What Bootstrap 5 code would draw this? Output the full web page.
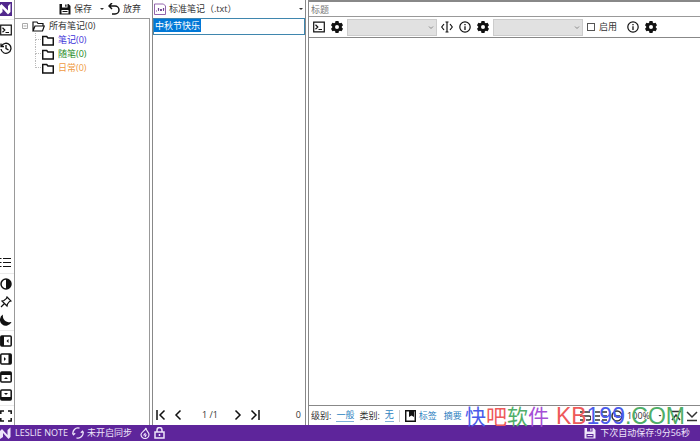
<!DOCTYPE html>
<html lang="zh-CN">
<head>
<meta charset="utf-8">
<meta name="viewport" content="width=device-width, initial-scale=1">
<title>Leslie Note</title>
<link href="https://cdn.jsdelivr.net/npm/bootstrap@5.3.0/dist/css/bootstrap.min.css" rel="stylesheet">
<style>
body{font-family:"Open Sans","Noto Sans CJK SC",sans-serif;font-size:9px;line-height:14px;color:#333;background:#fff}
svg{display:block;flex:none;fill:none;stroke:currentColor;stroke-width:1.5}
svg .solid{fill:currentColor;stroke:none}
svg .violet{fill:#51288c;stroke:none}
button,a{color:inherit;text-decoration:none}
button{border:0;background:none;padding:0;display:flex;align-items:center;gap:3px;white-space:nowrap}
button svg{color:#111}
.workspace{display:grid;grid-template-columns:15px 135fr 158fr 392fr;min-height:0}
.rail{border-right:1px solid #999;overflow:hidden}
.rail button{height:18px;width:15px}
.rail hr{margin:1px 0;border-color:#aaa;width:100%}
.topbar{height:18px}
.file-actions{padding-right:9px}
.panes{border:1px solid #999;border-left:0;border-bottom:0}
.tree ul{list-style:none;margin:0;padding:0}
.tree li{height:14px;display:flex;align-items:center;gap:4px}
.tree .root{padding-left:7px}
.tree .leaf{padding-left:27px;position:relative}
.tree .leaf svg{color:#111}
.tree .leaf::before{content:"";position:absolute;left:20px;top:0;width:6px;height:7px;border:dotted #bbb;border-width:0 0 1px 1px}
.tree .leaf:not(:last-child)::after{content:"";position:absolute;left:20px;top:7px;height:7px;border-left:1px dotted #bbb}
.tone-blue{color:#3c32d8}.tone-green{color:#218a21}.tone-orange{color:#ef9a42}
.notes{margin:0 2px;border:1px solid #888;border-width:0 1px}
.notes-list{border-top:1px solid #3f86ae}
.note-title{padding:0 2px 0 1px}
.note{height:16px;border:1px solid #3f86ae;border-top:0}
.note span{display:inline-block;background:#0078d7;color:#fff;line-height:13px;padding:0 1px}
.caret{width:4px;height:2px;background:#333;clip-path:polygon(0 0,100% 0,50% 100%)}
.editor{border:1px solid #888;border-bottom:0;border-right:0;border-top-width:2px}
.title-input{height:15px;border:0;border-bottom:1px solid #999;padding:0 2px;font-size:9px;width:100%;outline:0;border-radius:0}
.title-input::placeholder{color:#777;opacity:1}
.tools{height:21px;padding:0 4px;border-bottom:1px solid #888}
.tools button{margin-right:6px}
.tools button.me-1{margin-right:4px}
.tools select{display:block;appearance:none;width:90px;height:17px;border:1px solid #ccc;border-radius:0;background:#e1e1e1}
.tools label{margin-right:10px}
.picker{position:relative}
.picker svg{position:absolute;right:3px;top:7px;color:#888}
.tools input{appearance:none;width:8px;height:8px;margin:0;border:1px solid #555;background:#fff}
.body-text{border:0;resize:none;outline:0;width:100%;min-height:0}
.bottom{height:20px}
.pager{padding:0 4px 0 3px;gap:8px}
.pager .count{margin:0 8px 0 12px}
.props{border-top:1px solid #888;padding:0 2px;gap:5px}
.props a{color:#2b7fc0}
.props a.under{border-bottom:1px solid #7fb0da;line-height:12px}
.props .sep{width:1px;height:12px;background:#ccc}
.props .tag{gap:3px;margin-right:2px}
.status{height:16px;background:#5e259b;color:#eee5fa;padding-right:10px}
.status .synced{gap:3px}
.watermark{position:absolute;right:15px;bottom:9px;font-size:21px;line-height:32px;white-space:nowrap;pointer-events:none}
.watermark b{font-weight:400}
.wm-latin{font-family:"Liberation Sans",sans-serif;font-size:23px;margin-left:7px}
.c1{color:#4a5bea}.c2{color:#ee5a5a}.c3{color:#4fae68}.c4{color:#a64fd6}
</style>
</head>
<body class="d-flex flex-column vh-100 overflow-hidden position-relative">
<svg width="0" height="0" class="position-absolute" aria-hidden="true">
<symbol id="gear" viewBox="0 0 12 12"><path class="solid" fill-rule="evenodd" d="M4.500 0h3l.4 1.700 1 .6 1.700-.6L12 4.200 10.800 5.500v1L12 7.800l-1.400 2.500-1.700-.6-1 .6L7.500 12h-3l-.4-1.700-1-.6-1.700.6L0 7.800l1.200-1.300v-1L0 4.200l1.400-2.500 1.700.6 1-.6zM6 4a2 2 0 1 0 0 4 2 2 0 0 0 0-4z"/></symbol>
<symbol id="term" viewBox="0 0 12 12"><path d="M.7 1.200h10.600v9.600H.7zM2.500 3.800 4.800 6 2.500 8.200M5.500 8.500H9" stroke-width="1.200"/></symbol>
<symbol id="info" viewBox="0 0 12 12"><circle cx="6" cy="6" r="5.200" stroke-width="1.200"/><path d="M6 5.200V9M6 3v1.300" stroke-width="1.300"/></symbol>
<symbol id="folder" viewBox="0 0 12 11"><path d="M.7 1.500h4l1.200 1.500h5.400v7H.7z"/></symbol>
<symbol id="disk" viewBox="0 0 12 12"><path class="solid" fill-rule="evenodd" d="M1 1h8.500L11.500 3v8.500H.5V1zM3 1v3.500h5.500V1zM2.500 7v3.500h7V7z"/><path class="solid" d="M6.200 1.500h1.300v2.300H6.200zM3.500 8h5v1h-5z"/></symbol>
<symbol id="prev" viewBox="0 0 8 12"><path d="M6.500 1.500 2 6l4.500 4.500"/></symbol>
<symbol id="next" viewBox="0 0 8 12"><path d="M1.500 1.500 6 6l-4.500 4.500"/></symbol>
<symbol id="down" viewBox="0 0 6 4"><path d="m1 .5 2 2 2-2" stroke-width="1"/></symbol>
</svg>
<main class="workspace flex-grow-1">
<nav class="rail d-flex flex-column" aria-label="工具">
<button aria-label="主页"><svg class="text-white" width="12" height="14" viewBox="0 0 12 14"><path class="violet" d="M0 0h12v14H0z"/><path class="solid" d="M0 3.500 1.500 2 8 8.500V4l2.500-2.500V10L8 12.500 2.500 6.500V10L0 12z"/></svg></button>
<hr>
<button aria-label="控制台"><svg width="12" height="12"><use href="#term"/></svg></button>
<button aria-label="历史"><svg width="12" height="12" viewBox="0 0 12 12"><path d="M1.500 4A5 5 0 1 1 1 7M1 1.500V4.500h3M6 3v3.500l2.500 1.300" stroke-width="1.300"/></svg></button>
<div class="mt-auto"></div>
<button aria-label="列表"><svg width="12" height="12" viewBox="0 0 12 12"><path d="M3 1.500h8M3 5.500h8M3 9.500h8M0 1.500h1.500M0 5.500h1.500M0 9.500h1.500" stroke-width="1.200"/></svg></button>
<hr>
<button aria-label="对比度"><svg width="12" height="12" viewBox="0 0 12 12"><circle cx="6" cy="6" r="5"/><path class="solid" d="M6 1a5 5 0 0 1 0 10z"/></svg></button>
<button aria-label="固定"><svg width="12" height="12" viewBox="0 0 12 12"><path d="m7 1 4 4-1.500.5L7.500 8 7 10 2 5l2-.5L6.500 2.500zM4.500 7.500 1 11" stroke-width="1.200"/></svg></button>
<button aria-label="夜间"><svg width="12" height="12" viewBox="0 0 12 12"><path class="solid" d="M3 .5C2 5 6 9 11.500 8A6 6 0 1 1 3 .5z"/></svg></button>
<hr>
<button aria-label="左栏"><svg width="12" height="12" viewBox="0 0 12 12"><rect x=".8" y="1" width="10.400" height="10" rx="1"/><path class="solid" d="M1 1h3v10H1zM8.500 4v4l-2-2z"/></svg></button>
<button aria-label="右栏"><svg width="12" height="12" viewBox="0 0 12 12"><rect x=".8" y="1" width="10.400" height="10" rx="1"/><path class="solid" d="M8.500 1h2.500v10H8.500zM4 4v4l2-2z"/></svg></button>
<button aria-label="上栏"><svg width="12" height="12" viewBox="0 0 12 12"><rect x=".8" y="1" width="10.400" height="10" rx="1"/><path class="solid" d="M1 1h10v3H1zM4 8h4L6 6z"/></svg></button>
<button aria-label="下栏"><svg width="12" height="12" viewBox="0 0 12 12"><rect x=".8" y="1" width="10.400" height="10" rx="1"/><path class="solid" d="M1 8h10v3H1zM4 4h4L6 6z"/></svg></button>
<hr>
<button aria-label="全屏"><svg width="12" height="12" viewBox="0 0 12 12"><path d="M.8 4V1H4M8 1h3.200v3M11.200 8v3H8M4 11H.8V8"/></svg></button>
</nav>
<section class="d-flex flex-column">
<div class="topbar file-actions d-flex align-items-center justify-content-end gap-1">
<button><svg width="12" height="12"><use href="#disk"/></svg>保存</button>
<span class="caret ms-1"></span>
<button><svg width="12" height="12" viewBox="0 0 12 12"><path d="M4 0 1 3l3 3M1 3h6a4 4 0 0 1 0 8H4"/></svg>放弃</button>
</div>
<div class="panes tree flex-grow-1"><ul>
<li class="root"><svg width="6" height="6" viewBox="0 0 6 6" color="#aaa"><path d="M.5.500h5v5h-5zM1.500 3h3" stroke-width="1"/></svg><svg width="13" height="11" viewBox="0 0 13 11" color="#111"><path d="M1 10V1h4l1 1.500h5V5M1 10l2-5h9.300L10.500 10z" stroke-width="1.200"/></svg>所有笔记(0)</li>
<li class="leaf tone-blue"><svg width="12" height="11"><use href="#folder"/></svg>笔记(0)</li>
<li class="leaf tone-green"><svg width="12" height="11"><use href="#folder"/></svg>随笔(0)</li>
<li class="leaf tone-orange"><svg width="12" height="11"><use href="#folder"/></svg>日常(0)</li>
</ul></div>
</section>
<section class="notes d-flex flex-column">
<div class="topbar note-title d-flex align-items-center justify-content-between">
<button><svg width="12" height="12" viewBox="0 0 12 12"><path d="M.5 1h9l2 2v8.500H.5z" stroke="#9465ad" stroke-width="1"/><path d="M2 8h1M4.500 5v3M3.800 6h1.500M6 6l2 2M8 6 6 8M9.500 5v3M8.800 6h1.500" stroke="#6b3a8c" stroke-width=".9"/></svg>标准笔记（.txt）</button>
<span class="caret"></span></div>
<div class="notes-list flex-grow-1"><div class="note"><span>中秋节快乐</span></div></div>
<div class="bottom pager d-flex align-items-center">
<button aria-label="第一页"><svg width="10" height="12" viewBox="0 0 10 12"><path d="M1 1v10M8.500 1.500 4 6l4.500 4.500"/></svg></button>
<button aria-label="上一页"><svg width="8" height="12"><use href="#prev"/></svg></button>
<span class="count">1 /1</span>
<button aria-label="下一页"><svg width="8" height="12"><use href="#next"/></svg></button>
<button aria-label="末页"><svg width="10" height="12" viewBox="0 0 10 12"><path d="M9 1v10M1.500 1.500 6 6l-4.500 4.500"/></svg></button>
<span class="ms-auto">0</span></div>
</section>
<section class="editor d-flex flex-column">
<input class="title-input" placeholder="标题" aria-label="标题">
<div class="tools d-flex align-items-center">
<button aria-label="命令"><svg width="12" height="12"><use href="#term"/></svg></button>
<button class="me-1" aria-label="设置"><svg width="12" height="12"><use href="#gear"/></svg></button>
<span class="picker me-1"><select aria-label="命令选择" disabled></select><svg width="6" height="4"><use href="#down"/></svg></span>
<button aria-label="插入"><svg width="12" height="12" viewBox="0 0 12 12"><path d="M3 3 .7 6 3 9M9 3l2.300 3L9 9M4.500 1h3M4.500 11h3M6 1v10" stroke-width="1.200"/></svg></button>
<button aria-label="信息"><svg width="12" height="12"><use href="#info"/></svg></button>
<button class="me-1" aria-label="设置"><svg width="12" height="12"><use href="#gear"/></svg></button>
<span class="picker me-1"><select aria-label="模板选择" disabled></select><svg width="6" height="4"><use href="#down"/></svg></span>
<label class="d-flex align-items-center gap-1"><input type="checkbox">启用</label>
<button aria-label="信息"><svg width="12" height="12"><use href="#info"/></svg></button>
<button aria-label="设置"><svg width="12" height="12"><use href="#gear"/></svg></button>
</div>
<textarea class="body-text flex-grow-1" aria-label="正文"></textarea>
<div class="bottom props d-flex align-items-center text-nowrap">
<span>级别:</span><a class="under" href="#">一般</a><span>类别:</span><a class="under" href="#">无</a><span class="sep"></span>
<a href="#" class="tag d-flex align-items-center"><svg width="11" height="12" viewBox="0 0 11 12" color="#111"><path d="M.7.7h9.600v10.600H.7z"/><path class="solid" d="M4 1h5v6L6.500 5.500 4 7z"/></svg>标签</a><a href="#">摘要</a>
<div class="ms-auto d-flex align-items-center gap-1">
<svg width="12" height="12" viewBox="0 0 12 12"><path d="M1 2h10M1 6h9a2 2 0 0 1 0 4H7M1 10h3"/></svg>
<svg width="12" height="12" viewBox="0 0 12 12"><path d="M0 2h5M0 6h5M0 10h5M7 2h5M7 6h5M7 10h5"/></svg>
<svg width="12" height="12" viewBox="0 0 12 12"><circle cx="6" cy="6" r="5"/><path d="M3 6h6"/></svg>
<span>100%</span><span class="caret mx-1"></span>
<svg width="12" height="12" viewBox="0 0 12 12"><path d="M1 1.500h10M2 10l4-5 4 5"/></svg>
<svg width="12" height="12" viewBox="0 0 12 12"><path d="m1 2 5 5 5-5M1 10.500h10"/></svg>
</div></div>
</section>
</main>
<footer class="status d-flex align-items-center gap-1 text-nowrap">
<svg width="11" height="12" viewBox="0 0 11 12"><path class="solid" d="M0 4 2 2l5.500 6V3L10.500.5V10L8.500 12 3 6v4L0 12z"/></svg><span>LESLIE NOTE</span>
<span class="synced d-flex align-items-center me-1"><svg width="12" height="12" viewBox="0 0 12 12"><path d="M7.500 1.200A5 5 0 0 0 1.200 7.500M.5 5.800l1 2 1.700-1.500M4.500 10.800A5 5 0 0 0 10.800 4.500M11.500 6.200l-1-2-1.700 1.500" stroke-width="1.300"/></svg>未开启同步</span>
<svg width="10" height="12" viewBox="0 0 10 12"><path d="M6 1c0 3 3 4 3 6.500a4 4 0 0 1-8 0C1 5 5 4 6 1zM5.500 6 4 8h2L5 10" stroke-width="1.200"/></svg>
<svg width="11" height="12" viewBox="0 0 11 12"><path d="M1 5h9v6H1zM3 5V3a2.500 2.500 0 0 1 5 0v2M5.500 7v2"/></svg>
<svg class="ms-auto" width="12" height="12"><use href="#disk"/></svg><span>下次自动保存:9分56秒</span>
</footer>
<div class="watermark"><b class="c1">快</b><b class="c2">吧</b><b class="c3">软</b><b class="c4">件</b><span class="wm-latin"><b class="c2">KB</b><b class="c1">199</b><b class="c3">.COM</b></span></div>
<script src="https://cdn.jsdelivr.net/npm/bootstrap@5.3.0/dist/js/bootstrap.bundle.min.js"></script>
</body>
</html>
